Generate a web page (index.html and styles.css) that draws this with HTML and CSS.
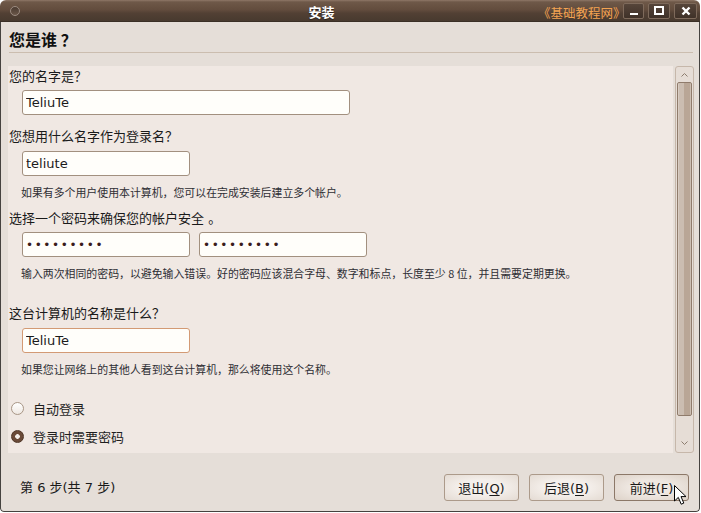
FILE: index.html
```html
<!DOCTYPE html>
<html lang="zh-CN">
<head>
    <meta charset="UTF-8" />
    <title>安装</title>
    <link rel="stylesheet" href="styles.css">
</head>
<body>
<div class="window">
    <!-- 标题栏 -->
    <div class="titlebar">
        <span class="menu-dot"></span>
        <span class="title">安装</span>
        <div class="wbtns">
            <span class="wbtn"><svg width="10" height="10" viewBox="0 0 10 10"><rect x="1" y="7" width="8" height="2" fill="#fff"/></svg></span>
            <span class="wbtn"><svg width="10" height="10" viewBox="0 0 10 10"><rect x="1" y="1" width="8" height="7" fill="none" stroke="#fff" stroke-width="2"/></svg></span>
            <span class="wbtn"><svg width="10" height="10" viewBox="0 0 10 10"><path d="M1.5 1.5 L8.5 8.5 M8.5 1.5 L1.5 8.5" stroke="#fff" stroke-width="2.4"/></svg></span>
        </div>
        <span class="brand">《基础教程网》</span>
    </div>

    <div class="body">
        <h1 class="heading">您是谁 ？</h1>

        <div class="pane">
            <div class="scroll">
                <div class="label first">您的名字是？</div>
                <input class="entry wide" type="text" value="TeliuTe">

                <div class="label">您想用什么名字作为登录名？</div>
                <input class="entry" type="text" value="teliute">
                <div class="note">如果有多个用户使用本计算机，您可以在完成安装后建立多个帐户。</div>

                <div class="label">选择一个密码来确保您的帐户安全 。</div>
                <div class="entry-row">
                    <input class="entry pw" type="password" value="123456789">
                    <input class="entry pw" type="password" value="123456789">
                </div>
                <div class="note">输入两次相同的密码，以避免输入错误。好的密码应该混合字母、数字和标点，长度至少 8 位，并且需要定期更换。</div>

                <div class="label gap">这台计算机的名称是什么？</div>
                <input class="entry focus" type="text" value="TeliuTe">
                <div class="note">如果您让网络上的其他人看到这台计算机，那么将使用这个名称。</div>

                <div class="radios">
                    <label class="radio"><span class="rdot"></span>自动登录</label>
                    <label class="radio"><span class="rdot on"></span>登录时需要密码</label>
                </div>
            </div>
            <div class="scrollbar">
                <div class="sb-btn up"><svg width="7" height="4" viewBox="0 0 7 4"><path d="M0.5 3.5 L3.5 0.5 L6.5 3.5" fill="none" stroke="#8c7c6e"/></svg></div>
                <div class="sb-thumb"></div>
                <div class="sb-fill"></div>
                <div class="sb-btn down"><svg width="7" height="4" viewBox="0 0 7 4"><path d="M0.5 0.5 L3.5 3.5 L6.5 0.5" fill="none" stroke="#8c7c6e"/></svg></div>
            </div>
        </div>

        <div class="footer">
            <span class="step">第 6 步(共 7 步)</span>
            <button class="btn">退出(<u>Q</u>)</button>
            <button class="btn">后退(<u>B</u>)</button>
            <button class="btn hot">前进(<u>F</u>)</button>
        </div>
    </div>

    <svg class="cursor" width="14" height="21" viewBox="0 0 14 21">
        <path d="M0.5 0.5 L0.5 16 L4.3 12.4 L7.2 19.2 L9.8 18.1 L7 11.6 L12 11.6 Z" fill="#fff" stroke="#000" stroke-width="1"/>
    </svg>
</div>
</body>
</html>
```

FILE: styles.css
```css
/* -------------------- 基础 -------------------- */
body{
    margin:0;background:#fff;color:#1e1e1e;
    font-family:"DejaVu Sans","Noto Sans CJK SC",sans-serif;font-size:13px;
}
.window{
    width:700px;height:512px;position:relative;
    display:flex;flex-direction:column;
    border-radius:6px 6px 4px 4px;overflow:hidden;
}

/* -------------------- 标题栏 -------------------- */
.titlebar{
    height:22px;flex:none;display:flex;align-items:center;
    background:linear-gradient(#8f7767 0,#6e5848 2px,#624c3d 45%,#524034 60%,#483a2f 95%,#2f251e 100%);
}
.menu-dot{
    width:8px;height:8px;margin-left:10px;border-radius:50%;
    border:1px solid #9b8b80;background:linear-gradient(#4a3a30,#6a5648);
}
.title{
    flex:1;text-align:center;color:#fff;font-weight:700;font-size:13px;
    text-shadow:0 1px 1px #2a1f18;
}
.wbtns{display:flex;gap:4px;margin-right:3px}
.wbtn{
    width:19px;height:14px;display:flex;align-items:center;justify-content:center;
    border:1px solid #7e6a5b;border-radius:2px;
    background:linear-gradient(#56453a,#3f3128);
}
.wbtn:nth-child(2){width:20px}
.wbtn:nth-child(3){width:21px}
.brand{
    position:absolute;left:538px;top:3px;
    color:#f4a452;font-size:12.5px;font-family:"Noto Sans CJK SC",sans-serif;
}

/* -------------------- 主体 -------------------- */
.body{
    flex:1;display:flex;flex-direction:column;
    background:#e5ded8;
    border:1px solid #45423f;border-top:none;border-radius:0 0 4px 4px;
}
.heading{
    margin:0 6px 0 8px;padding:7px 0 3px;
    font-size:16px;line-height:20px;font-weight:700;color:#111;
    font-family:"Noto Sans CJK SC",sans-serif;
    border-bottom:1px solid #cbbdaf;
}
.pane{display:flex;gap:2px;height:387px;margin:13px 5px 0 7px}

/* -------------------- 表单区 -------------------- */
.scroll{flex:1;background:#f0e8e3;padding:3px 0 0 1px;overflow:hidden}
.label{margin-top:14px;line-height:16px;color:#1a1a1a}
.label.first{margin-top:0}
.note + .label{margin-top:12px}
.note + .label.gap{margin-top:26px}
.entry{
    display:block;box-sizing:border-box;width:168px;height:25px;
    margin:6px 0 0 13px;padding:0 3px;
    border:1px solid #a2907f;border-radius:3px;background:#fffefa;
    font-family:"DejaVu Sans",sans-serif;font-size:13px;color:#1b1b1b;outline:none;
}
.entry.wide{width:328px;margin-top:5px}
.entry.focus{border-color:#d39a74}
.entry-row{display:flex;gap:9px;margin:5px 0 0 13px}
.entry-row .entry{margin:0}
.entry.pw{color:#3a1c1c;font-size:12px;letter-spacing:1.6px}
.note{
    margin:9px 0 0 12px;line-height:14px;font-size:10.9px;color:#2e2e34;
    font-family:"Noto Sans CJK SC",sans-serif;
}
.radios{margin-top:22px;display:flex;flex-direction:column;gap:8px}
.radio{display:flex;align-items:center;gap:9px;height:20px;padding-left:2px}
.rdot{
    width:13px;height:13px;box-sizing:border-box;border-radius:50%;
    border:1px solid #a89686;background:linear-gradient(#fff,#efe8e2);
}
.rdot.on{
    border-color:#4e3526;
    background:radial-gradient(circle,#f4eee9 0 2px,#6a4a38 2.6px);
}

/* -------------------- 滚动条 -------------------- */
.scrollbar{
    width:19px;box-sizing:border-box;display:flex;flex-direction:column;
    background:#e6ddd6;border:1px solid #c6b7aa;border-radius:3px;
}
.sb-btn{display:flex;align-items:center;justify-content:center;flex:none}
.sb-btn.up{height:15px}
.sb-btn.down{height:18px}
.sb-thumb{
    height:334px;margin:0 1px;flex:none;box-sizing:border-box;
    border:1px solid #8f7b6b;border-radius:2px;
    background:linear-gradient(90deg,#d8ccc2 0 1px,#cbbdb1 1px 50%,#b9a696 50% 93%,#cdbfb3 93%);
}
.sb-fill{flex:1}

/* -------------------- 底部按钮 -------------------- */
.footer{flex:1;display:flex;align-items:flex-start;gap:10px;padding:21px 10px 0 19px}
.step{flex:1;line-height:27px;color:#1a1a1a}
.btn{
    width:75px;height:27px;padding:0;
    border:1px solid #ac9a8a;border-radius:3px;
    background:radial-gradient(ellipse at center,#f5f0ec 40%,#e4dbd3 100%);
    font-family:"DejaVu Sans","Noto Sans CJK SC",sans-serif;font-size:13px;color:#1a1a1a;
}
.btn.hot{border-color:#8c7868;background:radial-gradient(ellipse at center,#efe8e2 40%,#ddd2c8 100%)}
.btn u{text-underline-offset:2px}

.cursor{position:absolute;left:674px;top:485px}
```
